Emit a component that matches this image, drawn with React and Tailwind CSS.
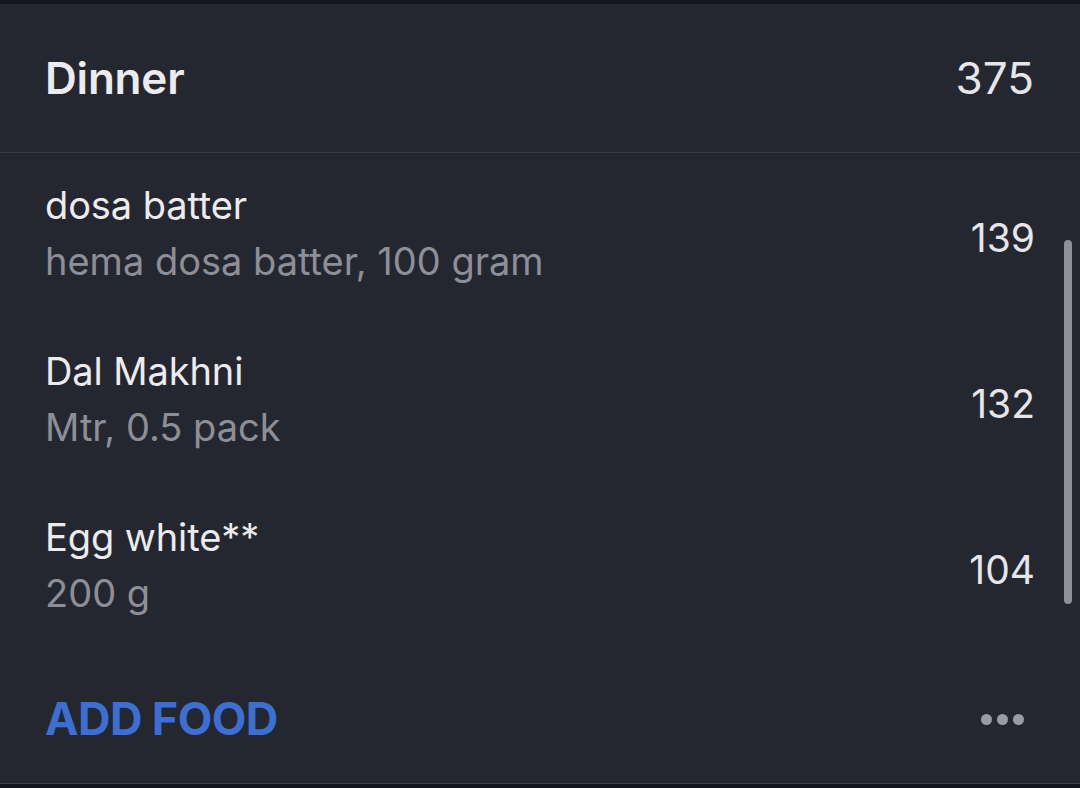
import React from "react";

const items = [
  { name: "dosa batter", detail: "hema dosa batter, 100 gram", cals: 139 },
  { name: "Dal Makhni", detail: "Mtr, 0.5 pack", cals: 132 },
  { name: "Egg white**", detail: "200 g", cals: 104 },
];

const App = () => {
  return (
    <div
      className="w-[1080px] h-[788px] overflow-hidden bg-[#13151f] flex flex-col"
      style={{ fontFamily: "Inter, 'Noto Sans', sans-serif" }}
    >
      <div className="h-[4px] shrink-0" />
      <div className="relative bg-[#252730] flex flex-col">
        {/* header */}
        <div className="h-[149px] flex items-center justify-between pl-[45px] pr-[46px] border-b border-[#393b45]">
          <span className="text-[44px] font-semibold text-[#ececee] tracking-[-0.2px]">Dinner</span>
          <span className="text-[44px] text-[#e6e6e8]">375</span>
        </div>

        {/* items */}
        <div className="flex flex-col">
          {items.map((item) => (
            <div key={item.name} className="h-[166px] pt-[24px] pb-[30px] pl-[45px] pr-[45px] flex items-center justify-between">
              <div className="flex flex-col">
                <span className="text-[38px] leading-[56px] text-[#ececee] tracking-[-0.1px]">{item.name}</span>
                <span className="text-[38px] leading-[56px] text-[#8d8f98]">{item.detail}</span>
              </div>
              <span className="text-[39px] leading-[56px] mt-[10px] text-[#e6e6e8]">{item.cals}</span>
            </div>
          ))}
        </div>

        {/* footer */}
        <div className="h-[132px] pt-[4px] flex items-center justify-between pl-[45px] pr-[56px]">
          <span className="text-[45px] font-bold text-[#3b6fd1] tracking-[-0.6px]">ADD FOOD</span>
          <div className="flex gap-[5px]">
            <span className="w-[11px] h-[11px] rounded-full bg-[#9a9ba3]" />
            <span className="w-[11px] h-[11px] rounded-full bg-[#9a9ba3]" />
            <span className="w-[11px] h-[11px] rounded-full bg-[#9a9ba3]" />
          </div>
        </div>

        <div className="absolute left-[1064px] top-[236px] w-[8px] h-[364px] rounded-full bg-[#8f9097]" />
      </div>
      <div className="h-[1px] bg-[#3e404b] shrink-0" />
    </div>
  );
};

export default App;
